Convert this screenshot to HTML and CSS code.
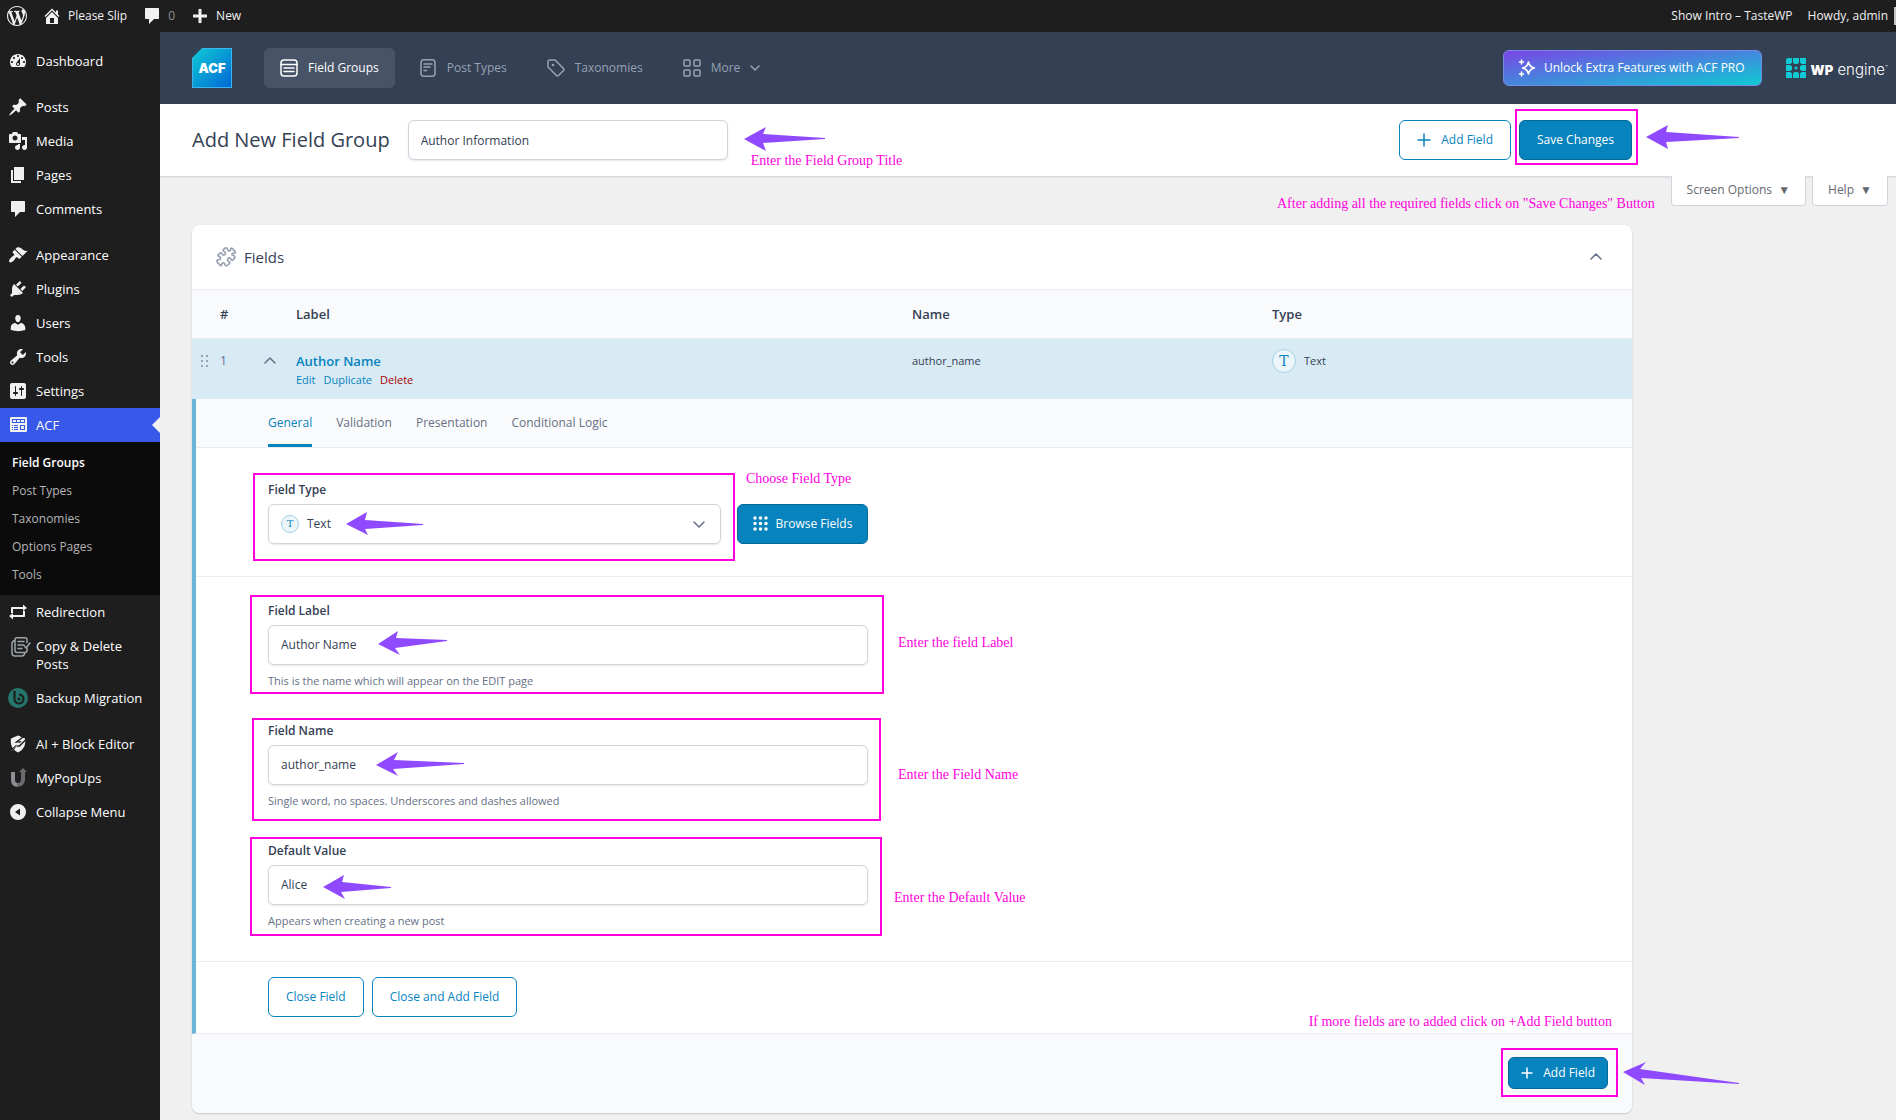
FILE: index.html
```html
<!DOCTYPE html>
<html lang="en">
<head>
    <meta charset="UTF-8">
    <meta name="viewport" content="width=device-width, initial-scale=1.0">
    <title>Add New Field Group</title>
    <link rel="stylesheet" href="styles.css">
</head>
<body>
    <header class="adminbar">
        <a href="#" class="bar-logo" aria-label="WordPress"><svg width="20" height="20" viewBox="0 0 20 20"><path d="M20 10c0-5.51-4.49-10-10-10C4.48 0 0 4.49 0 10c0 5.52 4.48 10 10 10 5.51 0 10-4.48 10-10zM7.78 15.37L4.37 6.22c.55-.02 1.17-.08 1.17-.08.5-.06.44-1.13-.06-1.11 0 0-1.45.11-2.37.11-.18 0-.37 0-.58-.01C4.12 2.69 6.87 1.11 10 1.11c2.33 0 4.45.87 6.05 2.34-.68-.11-1.65.39-1.65 1.58 0 .74.45 1.36.9 2.1.35.61.55 1.36.55 2.46 0 1.49-1.4 5-1.4 5l-3.03-8.37c.54-.02.82-.17.82-.17.5-.05.44-1.25-.06-1.22 0 0-1.44.12-2.38.12-.87 0-2.33-.12-2.33-.12-.5-.03-.56 1.2-.06 1.22l.92.08 1.26 3.41zM17.41 10c.24-.64.74-1.87.43-4.25.7 1.29 1.05 2.71 1.05 4.25 0 3.29-1.73 6.24-4.4 7.78.97-2.59 1.94-5.2 2.92-7.78zM6.1 18.09C3.12 16.65 1.11 13.53 1.11 10c0-1.3.23-2.48.72-3.59C3.25 10.3 4.67 14.2 6.1 18.09zm4.03-6.63l2.58 6.98c-.86.29-1.76.45-2.71.45-.79 0-1.57-.11-2.29-.33.81-2.38 1.62-4.74 2.42-7.1z"/></svg></a>
        <a href="#"><svg width="20" height="20" viewBox="0 0 20 20"><path d="M16 8.5l1.53 1.53-1.06 1.06L10 4.6l-6.47 6.49-1.06-1.06L10 2.5l4 4v-2h2v4zm-6-2.46l6 5.99V18H4v-5.97zM12 17v-5H8v5h4z"/></svg>Please Slip</a>
        <a href="#" class="bar-count"><svg width="20" height="20" viewBox="0 0 20 20"><path d="M4 2h12c.6 0 1 .4 1 1v9c0 .6-.4 1-1 1h-4l-5 5v-5H4c-.6 0-1-.4-1-1V3c0-.6.4-1 1-1z"/></svg>0</a>
        <a href="#"><svg width="20" height="20" viewBox="0 0 20 20"><path d="M17 8.500v3h-5.500V17h-3v-5.500H3v-3h5.500V3h3v5.500z"/></svg>New</a>
        <a href="#" class="bar-intro">Show Intro – TasteWP</a>
        <a href="#" class="bar-user">Howdy, admin<span class="avatar"></span></a>
    </header>

    <div class="layout">
        <nav class="sidebar">
            <ul class="menu">
                <li><a href="#"><svg width="20" height="20" viewBox="0 0 20 20"><path d="M3.760 16h12.480c1.100-1.370 1.760-3.110 1.760-5 0-4.420-3.580-8-8-8s-8 3.580-8 8c0 1.890.66 3.630 1.760 5zM10 4c.55 0 1 .45 1 1s-.45 1-1 1-1-.45-1-1 .45-1 1-1zM6 6c.55 0 1 .45 1 1s-.45 1-1 1-1-.45-1-1 .45-1 1-1zm8 0c.55 0 1 .45 1 1s-.45 1-1 1-1-.45-1-1 .45-1 1-1zm-5.370 5.550L12 7v6c0 1.100-.9 2-2 2s-2-.9-2-2c0-.57.24-1.080.63-1.450zM4 10c.55 0 1 .45 1 1s-.45 1-1 1-1-.45-1-1 .45-1 1-1zm12 0c.55 0 1 .45 1 1s-.45 1-1 1-1-.45-1-1 .45-1 1-1zm-5 3c0-.55-.45-1-1-1s-1 .45-1 1 .45 1 1 1 1-.45 1-1z"/></svg>Dashboard</a></li>
                <li class="group"><a href="#"><svg width="20" height="20" viewBox="0 0 20 20"><path d="M10.440 3.020l1.820-1.820 6.360 6.350-1.830 1.820c-1.050-.68-2.480-.57-3.410.36l-.75.75c-.92.93-1.040 2.350-.35 3.410l-1.830 1.820-2.410-2.410-2.800 2.790c-.42.42-3.380 2.710-3.800 2.290s1.860-3.390 2.280-3.810l2.790-2.790L4.100 9.360l1.830-1.820c1.050.69 2.480.57 3.400-.36l.75-.75c.93-.92 1.050-2.350.36-3.410z"/></svg>Posts</a></li>
                <li><a href="#"><svg width="20" height="20" viewBox="0 0 20 20"><path d="M13 11V4c0-.55-.45-1-1-1h-1.670L9 1H5L3.670 3H2c-.55 0-1 .45-1 1v7c0 .55.45 1 1 1h10c.55 0 1-.45 1-1zM7 4.500c1.380 0 2.500 1.120 2.500 2.500S8.380 9.500 7 9.500 4.500 8.380 4.500 7 5.620 4.500 7 4.500zM14 6h5v10.500c0 1.380-1.120 2.500-2.500 2.500S14 17.880 14 16.500s1.120-2.500 2.500-2.500c.17 0 .34.02.5.05V9h-3V6zm-4 8.050V13h2v3.500c0 1.380-1.120 2.500-2.500 2.500S7 17.880 7 16.500 8.120 14 9.500 14c.17 0 .34.02.5.05z"/></svg>Media</a></li>
                <li><a href="#"><svg width="20" height="20" viewBox="0 0 20 20"><path d="M6 15V2h10v13H6zm-1 1h8v2H3V5h2v11z"/></svg>Pages</a></li>
                <li><a href="#"><svg width="20" height="20" viewBox="0 0 20 20"><path d="M4 2h12c.6 0 1 .4 1 1v9c0 .6-.4 1-1 1h-4l-5 5v-5H4c-.6 0-1-.4-1-1V3c0-.6.4-1 1-1z"/></svg>Comments</a></li>
                <li class="group"><a href="#"><svg width="20" height="20" viewBox="0 0 20 20"><path d="M14.480 11.060L7.410 3.990l1.500-1.500c.5-.56 2.300-.47 3.510.32 1.210.8 1.430 1.280 2.910 2.100 1.180.64 2.450 1.260 4.450.85zm-.71.71L6.700 4.700 4.930 6.470c-.39.39-.39 1.020 0 1.410l1.060 1.060c.39.39.39 1.030 0 1.420-.6.6-1.430 1.110-2.210 1.690-.35.26-.7.53-1.010.84C1.430 14.230.4 16.080 1.400 17.070c.99 1 2.840-.03 4.180-1.360.31-.31.58-.66.85-1.020.57-.78 1.080-1.610 1.690-2.210.39-.39 1.020-.39 1.410 0l1.060 1.060c.39.39 1.020.39 1.410 0z"/></svg>Appearance</a></li>
                <li><a href="#"><svg width="20" height="20" viewBox="0 0 20 20"><path d="M13.110 4.360L9.870 7.600 8 5.730l3.240-3.240c.35-.34 1.050-.2 1.560.32.52.51.66 1.210.31 1.550zm-8 1.770l.91-1.120 9.010 9.010-1.190.84c-.71.71-2.630 1.160-3.820 1.160H6.140L4.900 17.260c-.59.59-1.540.59-2.120 0-.59-.58-.59-1.530 0-2.120l1.240-1.240v-3.880c0-1.130.4-3.190 1.090-3.890zm7.260 3.970l3.240-3.240c.34-.35 1.040-.21 1.550.31.52.51.66 1.210.31 1.550l-3.240 3.250z"/></svg>Plugins</a></li>
                <li><a href="#"><svg width="20" height="20" viewBox="0 0 20 20"><path d="M10 9.250c-2.270 0-2.730-3.440-2.730-3.440C7 4.020 7.820 2 9.970 2c2.160 0 2.980 2.020 2.710 3.810 0 0-.41 3.440-2.680 3.440zm0 2.570L12.720 10c2.390 0 4.520 2.330 4.520 4.530v2.490s-3.650 1.130-7.240 1.130c-3.650 0-7.240-1.130-7.240-1.130v-2.490c0-2.250 1.940-4.480 4.470-4.480z"/></svg>Users</a></li>
                <li><a href="#"><svg width="20" height="20" viewBox="0 0 20 20"><path d="M16.680 9.770c-1.340 1.340-3.300 1.670-4.950.99l-5.410 6.520c-.99.99-2.590.99-3.580 0s-.99-2.590 0-3.570l6.520-5.420c-.68-1.650-.35-3.610.99-4.950 1.280-1.280 3.120-1.620 4.720-1.060l-2.890 2.890 2.820 2.820 2.860-2.870c.53 1.580.18 3.390-1.080 4.650zM3.810 16.210c.4.39 1.040.39 1.430 0 .4-.4.4-1.040 0-1.430-.39-.4-1.030-.4-1.430 0-.39.39-.39 1.030 0 1.430z"/></svg>Tools</a></li>
                <li><a href="#"><svg width="20" height="20" viewBox="0 0 20 20"><path d="M18 16V4c0-1.100-.9-2-2-2H4c-1.100 0-2 .9-2 2v12c0 1.100.9 2 2 2h12c1.100 0 2-.9 2-2zM8 11h1c.55 0 1 .45 1 1s-.45 1-1 1H8v1.500c0 .28-.22.5-.5.5s-.5-.22-.5-.5V13H6c-.55 0-1-.45-1-1s.45-1 1-1h1V5.500c0-.28.22-.5.5-.5s.5.22.5.5V11zm5-2h-1c-.55 0-1-.45-1-1s.45-1 1-1h1V5.500c0-.28.22-.5.5-.5s.5.22.5.5V7h1c.55 0 1 .45 1 1s-.45 1-1 1h-1v5.500c0 .28-.22.5-.5.5s-.5-.22-.5-.5V9z"/></svg>Settings</a></li>
                <li class="current">
                    <a href="#"><svg width="20" height="20" viewBox="0 0 20 20"><path fill-rule="evenodd" d="M3 2h15q1 0 1 1v13q0 1-1 1H3q-1 0-1-1V3q0-1 1-1zM4 4v4h13V4zm8 6v5h5v-5zm-8 0v1h1v-1zm2 0v1h4v-1zm-2 2v1h1v-1zm2 0v1h4v-1zm-2 2v1h1v-1zm2 0v1h4v-1z"/><path d="M5 5h3v2H5zM9 5h3v2H9zM13 5h3v2h-3zM13 11h3v3h-3z"/></svg>ACF</a>
                    <ul class="submenu">
                        <li><a href="#" class="active">Field Groups</a></li>
                        <li><a href="#">Post Types</a></li>
                        <li><a href="#">Taxonomies</a></li>
                        <li><a href="#">Options Pages</a></li>
                        <li><a href="#">Tools</a></li>
                    </ul>
                </li>
                <li><a href="#"><svg width="20" height="20" viewBox="0 0 20 20"><path d="M5 7h3V5H4c-.6 0-1 .4-1 1v5h2V7zm10-2V2.500L19 6l-4 3V7H8V5zm0 8h-3v2h4c.6 0 1-.4 1-1V9h-2v4zM5 15v2.500L1 14l4-3v2h7v2z"/></svg>Redirection</a></li>
                <li class="two-line"><a href="#"><svg width="20" height="20" viewBox="0 0 20 20" class="line-icon grey"><path d="M6 .8h9q2 0 2 2v3M17 11v2.500q0 2-2 2H7q-2 0-2-2V2.800q0-2 2-2M5 3.500q-3 .5-3 3v9.500q0 3 3 3h7q2 0 3-3M8 4.500h6M8 8h6M8 11.500h4M14 8.500l2 2.500 4-5"/></svg>Copy &amp; Delete Posts</a></li>
                <li><a href="#"><svg width="20" height="20" viewBox="0 0 20 20"><circle cx="10" cy="10" r="10" fill="#24766c"/><path d="M6.500 3v8a4.500 4.500 0 1 0 4.500-4.500" fill="none" stroke="#1e1e1e" stroke-width="2.200"/><circle cx="11" cy="11" r="1.600" fill="#1e1e1e"/></svg>Backup Migration</a></li>
                <li class="group"><a href="#"><svg width="20" height="20" viewBox="0 0 20 20"><path d="M10 1.500l7 3c1 6-1 11-7 14-6-3-8-8-7-14z"/><path d="M18.500 .5L8.500 8H12L1 18.500M19 4.500L11.500 12H8L2.500 19" fill="none" stroke="#1e1e1e" stroke-width="1.400"/><path d="M18 2.500L10 8.500l2.500.5L2 18l7-7-2-.5z"/></svg>AI + Block Editor</a></li>
                <li><a href="#"><svg width="20" height="20" viewBox="0 0 20 20"><path d="M3 4h4v8q0 3 3 3l-1 4q-6-1-6-7z" fill="#8e8f92"/><path d="M10 15q3 0 3-4V4h-2l4-4 4 4h-2v8q-1 7-8 7z" fill="#6b6c6f"/></svg>MyPopUps</a></li>
                <li><a href="#"><svg width="20" height="20" viewBox="0 0 20 20"><path fill-rule="evenodd" d="M10 2a8 8 0 1 0 0 16 8 8 0 0 0 0-16zm2 4.500v7L7 10z"/></svg>Collapse Menu</a></li>
            </ul>
        </nav>

        <main class="main">
            <div class="acf-nav">
                <a href="#" class="acf-logo">ACF</a>
                <nav class="acf-tabs">
                    <a href="#" class="active"><svg width="18" height="18" viewBox="0 0 18 18" class="line-icon"><rect x="1" y="1" width="16" height="16" rx="3"/><path d="M1 5.500h16M4 9h10M4 12.500h10"/></svg>Field Groups</a>
                    <a href="#"><svg width="18" height="18" viewBox="0 0 18 18" class="line-icon"><rect x="2" y="0.800" width="14" height="16.500" rx="3"/><path d="M5 5h8M5 8h6M5 11.500h2.500"/></svg>Post Types</a>
                    <a href="#"><svg width="18" height="18" viewBox="0 0 18 18" class="line-icon"><path d="M1 3q0-2 2-2h5l8.500 8.500q1 1 0 2l-5 5q-1 1-2 0L1 8z"/><circle cx="6" cy="6" r=".6"/></svg>Taxonomies</a>
                    <a href="#"><svg width="18" height="18" viewBox="0 0 18 18" class="line-icon"><rect x="1" y="1" width="6" height="6" rx="1"/><rect x="11" y="1" width="6" height="6" rx="1"/><rect x="1" y="11" width="6" height="6" rx="1"/><rect x="11" y="11" width="6" height="6" rx="1"/></svg>More<svg width="10" height="6" viewBox="0 0 10 6" class="line-icon"><path d="M1 1l4 4 4-4"/></svg></a>
                </nav>
                <a href="#" class="upgrade"><svg width="18" height="18" viewBox="0 0 18 18" class="line-icon"><path d="M10.500 3q1 5 6 6-5 1-6 6-1-5-6-6 5-1 6-6zM3.500 1v4M1.500 3h4M3.500 13v4M1.500 15h4"/></svg>Unlock Extra Features with ACF PRO</a>
                <a href="#" class="wpengine">
                    <svg width="20" height="20" viewBox="0 0 20 20"><path d="M0 1.500L1.500 0H6v4.500L4.500 6H0zM7 0h6v4.500L11.500 6h-3L7 4.500zM14 0h6v6h-4.500L14 4.500zM0 7h4.500L6 8.500v3L4.500 13H0zM20 7h-4.500L14 8.500v3l1.500 1.500H20zM0 14h4.500L6 15.500V20H0zM7 20v-4.500L8.500 14h3l1.500 1.500V20zM14 20v-4.500l1.500-1.500H20v6z"/><circle cx="10" cy="10" r="1.500"/></svg>
                    <span><b>WP</b> engine<small>™</small></span>
                </a>
            </div>

            <form class="title-bar">
                <div class="title-inner">
                    <h1><label for="group-title">Add New Field Group</label></h1>
                    <input type="text" id="group-title" class="text-input" value="Author Information">
                    <div class="title-note">
                        <svg class="arrow" width="82" height="24" viewBox="0 0 82 24"><path d="M0 12L22 0l-3 7 62 4v1l-62 4 3 8z"/></svg>
                        <span class="note">Enter the Field Group Title</span>
                    </div>
                    <button type="button" class="btn outline add-top"><svg width="14" height="14" viewBox="0 0 14 14" class="line-icon"><path d="M7 1v12M1 7h12"/></svg>Add Field</button>
                    <div class="save">
                        <button type="button" class="btn primary">Save Changes</button>
                        <span class="frame save-frame"></span>
                        <svg class="arrow save-arrow" width="94" height="24" viewBox="0 0 94 24"><path d="M0 12L22 0l-2 7 73 5v1l-73 4 2 7z"/></svg>
                    </div>
                </div>
            </form>

            <div class="screen-meta">
                <span class="note save-note">After adding all the required fields click on "Save Changes" Button</span>
                <button type="button">Screen Options <span>▼</span></button>
                <button type="button">Help <span>▼</span></button>
            </div>

            <section class="card">
                <div class="card-head">
                    <svg width="20" height="20" viewBox="0 0 24 24" class="line-icon puzzle"><path d="M19.400 7.900c-.2.200-.3.600-.2.900l.1.500c.3 1.300 2.700.5 3.200 2 .3 1 0 2-.8 2.700l-1.600 1.600c-.5.500-1.200.5-1.600 0-.8-.8-1-2.500-2.400-2.500a2.300 2.300 0 0 0-1.500 4c.8.700 2 .8 2 1.700 0 .5-.3.900-.6 1.200l-1.600 1.600c-.7.700-1.700 1-2.700.8-1.500-.5-.7-3-2.100-3.200-2-.5-3 1-2.800 2.200.100.900-1 1.300-1.600.7L1.900 18.800c-.8-.8-.9-2-.3-2.900.8-1.200 2.800-.2 3.500-1.400.8-1.500-.2-2.800-1.500-3.200-1.300-.4-1.600-1.200-1-1.900l2-2c.6-.6 1.500-.5 2 .2.700.9 1 2.200 2.400 2.200a2.300 2.300 0 0 0 1.500-4c-.8-.7-2-.8-1.900-1.800 0-.4.3-.8.600-1.100l1-1c.7-.7 1.800-1 2.700-.6 1.500.6.600 3 2.100 3.300 2 .4 2.800-1 2.700-2.200 0-1 1-1.300 1.600-.7l3 3c.8.800.9 2 .2 2.700z"/></svg>
                    <h2>Fields</h2>
                    <button type="button" class="icon-btn" aria-label="Toggle panel"><svg width="12" height="8" viewBox="0 0 12 8" class="line-icon"><path d="M1 6l5-5 5 5"/></svg></button>
                </div>

                <table class="fields">
                    <thead>
                        <tr><th class="col-order">#</th><th>Label</th><th class="col-quarter">Name</th><th class="col-quarter">Type</th></tr>
                    </thead>
                    <tbody>
                        <tr>
                            <td>
                                <div class="order">
                                    <svg width="8" height="12" viewBox="0 0 8 12"><path d="M0 0h2v2H0zM5 0h2v2H5zM0 5h2v2H0zM5 5h2v2H5zM0 10h2v2H0zM5 10h2v2H5z"/></svg>
                                    <span>1</span>
                                    <svg width="12" height="8" viewBox="0 0 12 8" class="line-icon toggle"><path d="M1 6l5-5 5 5"/></svg>
                                </div>
                            </td>
                            <td>
                                <a href="#" class="field-title">Author Name</a>
                                <div class="row-actions"><a href="#">Edit</a><a href="#">Duplicate</a><a href="#" class="delete">Delete</a></div>
                            </td>
                            <td>author_name</td>
                            <td><div class="type"><span class="type-icon">T</span>Text</div></td>
                        </tr>
                    </tbody>
                </table>

                <form class="settings">
                    <div class="tabs">
                        <a href="#" class="active">General</a>
                        <a href="#">Validation</a>
                        <a href="#">Presentation</a>
                        <a href="#">Conditional Logic</a>
                    </div>

                    <div class="section type-section">
                        <div class="field">
                            <label for="field-type">Field Type</label>
                            <div class="type-row">
                                <div class="select-wrap">
                                    <select id="field-type"><option>Text</option></select>
                                    <span class="type-icon small">T</span>
                                    <svg width="14" height="8" viewBox="0 0 14 8" class="line-icon caret"><path d="M2 1l5 5 5-5"/></svg>
                                    <svg class="arrow type-arrow" width="78" height="24" viewBox="0 0 78 24"><path d="M0 12L21 0l-2 8 58 4v1l-58 4 3 6z"/></svg>
                                    <span class="frame type-frame"></span>
                                </div>
                                <button type="button" class="btn primary browse"><svg width="15" height="15" viewBox="0 0 15 15" class="dots"><path d="M2 2h0M7.500 2h0M13 2h0M2 7.500h0M7.500 7.500h0M13 7.500h0M2 13h0M7.500 13h0M13 13h0"/></svg>Browse Fields</button>
                            </div>
                            <span class="note type-note">Choose Field Type</span>
                        </div>
                    </div>

                    <div class="section">
                        <div class="field">
                            <label for="field-label">Field Label</label>
                            <input type="text" id="field-label" class="text-input" value="Author Name">
                            <p>This is the name which will appear on the EDIT page</p>
                            <span class="frame label-frame"></span>
                            <svg class="arrow label-arrow" width="70" height="24" viewBox="0 0 70 24"><path d="M0 13L20 0l-2 7 51 2v1l-52 7 5 7z"/></svg>
                            <span class="note label-note">Enter the field Label</span>
                        </div>
                        <div class="field">
                            <label for="field-name">Field Name</label>
                            <input type="text" id="field-name" class="text-input" value="author_name">
                            <p>Single word, no spaces. Underscores and dashes allowed</p>
                            <span class="frame name-frame"></span>
                            <svg class="arrow name-arrow" width="90" height="24" viewBox="0 0 90 24"><path d="M0 13L22 0l-4 8 70 3v1l-71 5 5 7z"/></svg>
                            <span class="note name-note">Enter the Field Name</span>
                        </div>
                        <div class="field">
                            <label for="default-value">Default Value</label>
                            <input type="text" id="default-value" class="text-input" value="Alice">
                            <p>Appears when creating a new post</p>
                            <span class="frame value-frame"></span>
                            <svg class="arrow value-arrow" width="70" height="24" viewBox="0 0 70 24"><path d="M0 12L21 0l-2 7 49 5v1l-50 4 4 7z"/></svg>
                            <span class="note value-note">Enter the Default Value</span>
                        </div>
                    </div>

                    <div class="field-actions">
                        <button type="button" class="btn outline">Close Field</button>
                        <button type="button" class="btn outline">Close and Add Field</button>
                    </div>
                </form>

                <div class="card-foot">
                    <span class="note foot-note">If more fields are to added click on +Add Field button</span>
                    <div class="foot-add">
                        <button type="button" class="btn primary short"><svg width="12" height="12" viewBox="0 0 12 12" class="line-icon"><path d="M6 1v10M1 6h10"/></svg>Add Field</button>
                        <span class="frame foot-frame"></span>
                        <svg class="arrow foot-arrow" width="117" height="24" viewBox="0 0 117 24"><path d="M0 10L23 0l-6 7 99 14v1l-98-6 4 7z"/></svg>
                    </div>
                </div>
            </section>
        </main>
    </div>
</body>
</html>
```
FILE: styles.css
```css
* {
    box-sizing: border-box;
}
body {
    font-family: 'Open Sans', 'Noto Sans', sans-serif;
    font-size: 13px;
    line-height: 20px;
    margin: 0;
    background: #f0f0f1;
    color: #344054;
    min-height: 100vh;
    display: flex;
    flex-direction: column;
}
a {
    color: inherit;
    text-decoration: none;
}
button, input, select {
    font: inherit;
    color: inherit;
    margin: 0;
}
svg {
    fill: currentColor;
    flex-shrink: 0;
}
.line-icon {
    fill: none;
    stroke: currentColor;
    stroke-width: 1.500;
    stroke-linecap: round;
    stroke-linejoin: round;
    overflow: visible;
}

/* admin bar */
.adminbar {
    height: 32px;
    background: #1e1e1e;
    color: #f0f0f1;
    display: flex;
    align-items: center;
    padding-left: 7px;
    gap: 15px;
    font-size: 12px;
    overflow: hidden;
    white-space: nowrap;
}
.adminbar a {
    display: flex;
    align-items: center;
    gap: 6px;
}
.bar-count {
    color: #8c8f94;
}
.bar-count svg {
    color: #f0f0f1;
}
.bar-intro {
    margin-left: auto;
}
.avatar {
    width: 2px;
    height: 18px;
    background: #c3c4c7;
}

/* sidebar */
.layout {
    display: flex;
    flex: 1;
}
.sidebar {
    width: 160px;
    flex-shrink: 0;
    background: #1e1e1e;
    color: #f0f0f1;
    padding-top: 12px;
}
.menu, .submenu {
    list-style: none;
    margin: 0;
    padding: 0;
}
.menu > li > a {
    display: flex;
    align-items: center;
    gap: 8px;
    min-height: 34px;
    padding: 0 8px;
    line-height: 18px;
    color: #fff;
}
.menu > li > a svg {
    color: #f0f0f1;
}
.menu > .group {
    margin-top: 12px;
}
.menu > .two-line > a {
    min-height: 52px;
    align-items: flex-start;
    padding: 8px 8px 8px 10px;
    gap: 6px;
}
.menu > .two-line svg {
    color: #9ca2a7;
}
.menu > .current > a {
    background: #3858e9;
    position: relative;
}
.menu > .current > a::after {
    content: "";
    position: absolute;
    right: 0;
    top: 9px;
    border: 8px solid transparent;
    border-left: 0;
    border-right-color: #f0f0f1;
}
.submenu {
    background: #0b0b0b;
    padding: 7px 12px 6px;
    font-size: 12px;
    color: #b5b5b6;
}
.submenu a {
    display: block;
    line-height: 28px;
}
.submenu .active {
    color: #fff;
    font-weight: 600;
}

/* ACF header */
.main {
    flex: 1;
    min-width: 0;
}
.acf-nav {
    height: 72px;
    background: #344054;
    color: #98a2b3;
    display: flex;
    align-items: center;
    padding: 0 8px 0 32px;
    white-space: nowrap;
    font-size: 12px;
}
.acf-logo {
    width: 40px;
    height: 40px;
    border: 1px solid #3fb4ec;
    background: linear-gradient(135deg, #0ecad4, #0168d7);
    clip-path: polygon(10px 0, 100% 0, 100% 100%, 0 100%, 0 10px);
    color: #fff;
    display: flex;
    align-items: center;
    justify-content: center;
    font-family: Inter, sans-serif;
    font-weight: 900;
    font-size: 13px;
}
.acf-tabs {
    display: flex;
    gap: 8px;
    margin-left: 32px;
}
.acf-tabs a {
    height: 40px;
    padding: 0 16px;
    border-radius: 6px;
    display: flex;
    align-items: center;
    gap: 10px;
}
.acf-tabs .active {
    background: #475467;
    color: #fff;
}
.upgrade {
    margin-left: auto;
    height: 36px;
    padding: 0 16px 0 14px;
    border: 1px solid #7889e4;
    border-radius: 6px;
    background: linear-gradient(to bottom right, #7a45e5, #0ecad4);
    color: #fff;
    display: flex;
    align-items: center;
    gap: 8px;
}
.wpengine {
    margin-left: 24px;
    display: flex;
    align-items: center;
    gap: 5px;
    color: #0ecad4;
    font-family: Inter, sans-serif;
    font-size: 15px;
    font-weight: 300;
}
.wpengine span {
    color: #fff;
}
.wpengine b {
    font-size: 13px;
    font-weight: 900;
}
.wpengine small {
    font-size: 5px;
    vertical-align: 6px;
}

/* title bar */
.title-bar {
    background: #fff;
    padding: 16px 32px;
    box-shadow: 0 1px 2px rgba(16, 24, 40, 0.15);
    position: relative;
}
.title-inner {
    max-width: 1440px;
    display: flex;
    align-items: center;
    gap: 8px;
}
.title-bar h1 {
    font-size: 20px;
    font-weight: 400;
    margin: 0 10px 0 0;
    white-space: nowrap;
}
.text-input {
    display: block;
    width: 100%;
    height: 40px;
    padding: 0 12px;
    border: 1px solid #d0d5dd;
    border-radius: 6px;
    background: #fff;
    box-shadow: 0 1px 2px rgba(16, 24, 40, 0.1);
    font-size: 12px;
}
.title-inner .text-input {
    width: 320px;
}
.btn {
    height: 40px;
    border-radius: 6px;
    padding: 0 17px;
    display: flex;
    align-items: center;
    justify-content: center;
    gap: 10px;
    font-size: 12px;
    white-space: nowrap;
}
.outline {
    background: #fff;
    border: 1px solid #0783be;
    color: #0783be;
}
.primary {
    background: #0783be;
    border: 1px solid #066998;
    color: #fff;
}
.short {
    height: 32px;
    padding: 0 12px;
}
.add-top {
    margin-left: auto;
}
.save {
    position: relative;
}

.screen-meta {
    display: flex;
    justify-content: flex-end;
    gap: 6px;
    padding-right: 8px;
    position: relative;
}
.screen-meta button {
    height: 30px;
    padding: 0 15px 2px;
    background: #fff;
    border: 1px solid #d0d5dd;
    border-top: 0;
    border-radius: 0 0 4px 4px;
    color: #646970;
    font-size: 12px;
}
.screen-meta button span {
    font-size: 12px;
    margin-left: 3px;
}

/* fields card */
.card {
    max-width: 1440px;
    margin: 19px 32px 7px;
    background: #fff;
    border-radius: 8px;
    box-shadow: 0 1px 2px rgba(16, 24, 40, 0.2);
}
.card-head {
    display: flex;
    align-items: center;
    gap: 8px;
    height: 64px;
    padding: 0 24px;
}
.card-head h2 {
    font-size: 15px;
    font-weight: 400;
    margin: 0;
}
.puzzle {
    color: #98a2b3;
    stroke-width: 2;
}
.icon-btn {
    margin-left: auto;
    padding: 6px;
    border: 0;
    background: none;
    color: #667085;
    display: flex;
}
.fields {
    width: 100%;
    table-layout: fixed;
    border-collapse: collapse;
}
.fields th {
    height: 49px;
    padding: 0;
    text-align: left;
    font-weight: 600;
    background: #f9fafb;
    border-top: 1px solid #eaecf0;
    border-bottom: 1px solid #eaecf0;
}
.fields .col-order {
    width: 104px;
    padding-left: 28px;
}
.col-quarter {
    width: 25%;
}
.fields td {
    height: 60px;
    padding: 12px 0 8px;
    vertical-align: top;
    background: #d8eaf4;
    font-size: 11px;
}
.order {
    display: flex;
    align-items: center;
    padding-left: 9px;
    color: #667085;
    font-size: 12px;
}
.order svg:first-child {
    color: #98a2b3;
}
.order span {
    margin-left: 11px;
}
.order .toggle {
    margin-left: 37px;
}
.field-title {
    display: block;
    font-size: 13px;
    font-weight: 600;
    color: #0783be;
}
.row-actions {
    display: flex;
    gap: 8px;
    font-size: 11px;
    line-height: 18px;
    color: #0783be;
}
.row-actions .delete {
    color: #a00;
}
.type {
    display: flex;
    align-items: center;
    gap: 8px;
    height: 20px;
}
.type-icon {
    width: 24px;
    height: 24px;
    border: 1px solid #a5d2e7;
    border-radius: 50%;
    background: #ebf5fa;
    color: #0783be;
    font: 14px/22px 'DejaVu Serif', serif;
    text-align: center;
}

/* field settings */
.settings {
    border-left: 4px solid #6bb5d8;
    border-bottom: 1px solid #eaecf0;
}
.tabs {
    display: flex;
    gap: 24px;
    height: 49px;
    padding-left: 72px;
    background: #f9fafb;
    border-bottom: 1px solid #eaecf0;
    font-size: 12px;
    line-height: 48px;
    color: #667085;
}
.tabs .active {
    color: #0783be;
    border-bottom: 3px solid #0783be;
}
.section {
    padding: 24px 72px 30px;
    border-bottom: 1px solid #eaecf0;
    display: flex;
    flex-direction: column;
    gap: 30px;
}
.type-section {
    padding: 32px 72px;
}
.field {
    position: relative;
    max-width: 600px;
}
.field label {
    display: block;
    margin-bottom: 4px;
    font-size: 12px;
    font-weight: 600;
}
.field p {
    margin: 6px 0 0;
    font-size: 11px;
    color: #667085;
}
.type-row {
    display: flex;
    gap: 16px;
}
.select-wrap {
    flex: 1;
    position: relative;
}
.select-wrap select {
    appearance: none;
    width: 100%;
    height: 40px;
    padding: 0 38px;
    border: 1px solid #d0d5dd;
    border-radius: 6px;
    background: #fff;
    box-shadow: 0 1px 2px rgba(16, 24, 40, 0.1);
    font-size: 12px;
}
.type-icon.small {
    position: absolute;
    left: 13px;
    top: 11px;
    width: 18px;
    height: 18px;
    font-size: 10px;
    line-height: 16px;
}
.caret {
    position: absolute;
    right: 15px;
    top: 17px;
    color: #667085;
}
.browse {
    width: 131px;
    padding: 0;
    gap: 8px;
}
.dots {
    stroke: currentColor;
    stroke-width: 3.500;
    stroke-linecap: round;
}
.field-actions {
    display: flex;
    gap: 8px;
    padding: 15px 72px 16px;
}
.card-foot {
    display: flex;
    justify-content: flex-end;
    padding: 23px 24px 24px;
    background: #f9fafb;
    border-radius: 0 0 8px 8px;
    position: relative;
}
.foot-add {
    position: relative;
}

/* walkthrough marks, drawn over the form */
.note {
    position: absolute;
    font-family: 'Liberation Serif', serif;
    font-size: 14px;
    line-height: 22px;
    color: #ff00dc;
    white-space: nowrap;
}
.arrow {
    position: absolute;
    color: #8f4aff;
}
.frame {
    position: absolute;
    border: 2px solid #ff00dc;
    pointer-events: none;
}
.title-note {
    position: relative;
    align-self: stretch;
}
.title-note .arrow {
    left: 8px;
    top: 7px;
}
.title-note .note {
    left: 15px;
    top: 30px;
}
.save-frame {
    inset: -11px -6px -5px -4px;
}
.save-arrow {
    left: calc(100% + 14px);
    top: 5px;
}
.save-note {
    left: 1117px;
    top: 17px;
}
.type-frame {
    inset: -31px -14px -17px -15px;
}
.type-arrow {
    left: 78px;
    top: 8px;
}
.type-note {
    left: 478px;
    top: -12px;
}
.label-frame {
    inset: -6px -16px -3px -18px;
}
.label-arrow {
    left: 110px;
    top: 30px;
}
.label-note {
    left: 630px;
    top: 31px;
}
.name-frame {
    inset: -3px -13px -10px -16px;
}
.name-arrow {
    left: 108px;
    top: 31px;
}
.name-note {
    left: 630px;
    top: 43px;
}
.value-frame {
    inset: -4px -14px -5px -18px;
}
.value-arrow {
    left: 55px;
    top: 34px;
}
.value-note {
    left: 626px;
    top: 46px;
}
.foot-note {
    right: 20px;
    top: -23px;
}
.foot-frame {
    inset: -9px -10px -8px -7px;
}
.foot-arrow {
    left: calc(100% + 15px);
    top: 5px;
}
```
